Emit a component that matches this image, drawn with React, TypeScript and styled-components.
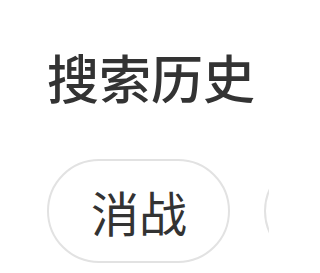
import React from "react";
import styled, { createGlobalStyle } from "styled-components";

const history = ["消战", "王一博"];

const GlobalStyle = createGlobalStyle`
  html, body {
    margin: 0;
    padding: 0;
    background: #ffffff;
    overflow: hidden;
    font-family: "Noto Sans CJK SC", "Noto Sans", sans-serif;
  }
`;

const App = () => {
  return (
    <>
      <GlobalStyle />
      <Section>
        <Title>搜索历史</Title>
        <TagList>
          {history.map((item) => (
            <Tag key={item}>{item}</Tag>
          ))}
        </TagList>
      </Section>
    </>
  );
};

const Section = styled.div`
  padding: 46px 0 0 47px;
  overflow: hidden;
  width: 269px;
  box-sizing: border-box;
`;

const Title = styled.h2`
  margin: 0;
  font-size: 52px;
  line-height: 1.2;
  font-weight: 500;
  color: #333333;
  letter-spacing: 0;
`;

const TagList = styled.div`
  display: flex;
  gap: 34px;
  margin-top: 51px;
  white-space: nowrap;
  overflow: hidden;
`;

const Tag = styled.span`
  flex-shrink: 0;
  display: inline-flex;
  align-items: center;
  justify-content: center;
  box-sizing: border-box;
  height: 104px;
  padding: 0 41px 0 42px;
  border: 2px solid #e2e2e2;
  border-radius: 52px;
  font-size: 48px;
  font-weight: 400;
  color: #333333;
`;

export default App;
